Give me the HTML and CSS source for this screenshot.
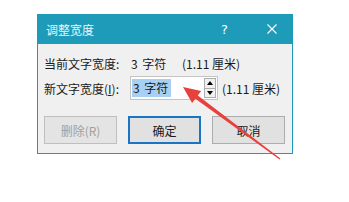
FILE: index.html
```html
<!DOCTYPE html>
<html lang="zh-CN">
<head>
  <meta charset="UTF-8">
  <title>调整宽度</title>
  <link rel="stylesheet" href="styles.css">
</head>
<body>
<div class="page">
  <div class="dialog">
    <div class="titlebar">
      <span class="title">调整宽度</span>
      <span class="help">?</span>
      <span class="close">
        <svg width="10" height="10" viewBox="0 0 10 10"><path d="M0.5 0.5 L9.5 9.5 M9.5 0.5 L0.5 9.5" stroke="#fff" stroke-width="1.2"/></svg>
      </span>
    </div>

    <div class="body">
      <div class="row first">
        <span class="label">当前文字宽度:</span>
        <span class="value">3&nbsp;字符</span>
        <span class="unit">(1.11 厘米)</span>
      </div>

      <div class="row">
        <span class="label">新文字宽度(<u>I</u>):</span>
        <div class="spin-input">
          <span class="selected">3&nbsp;字符</span>
          <div class="spinner">
            <div class="spin-btn"><svg width="6" height="4" viewBox="0 0 6 4"><path d="M3 0 L6 4 L0 4 Z" fill="#000"/></svg></div>
            <div class="spin-btn"><svg width="6" height="4" viewBox="0 0 6 4"><path d="M0 0 L6 0 L3 4 Z" fill="#000"/></svg></div>
          </div>
        </div>
        <span class="unit">(1.11 厘米)</span>
      </div>

      <div class="buttons">
        <button class="btn disabled">删除(R)</button>
        <button class="btn default">确定</button>
        <button class="btn">取消</button>
      </div>
    </div>
  </div>

  <!-- red annotation arrow -->
  <svg class="arrow" width="349" height="202" viewBox="0 0 349 202">
    <polygon points="183,87 201.1,91.1 197.8,95.5 280.4,158.5 279.6,159.5 195.4,98.7 192.1,103.1" fill="#e8403a"/>
  </svg>
</div>
</body>
</html>
```

FILE: styles.css
```css
body {
  margin: 0;
  background: #fff;
  font-family: "Noto Sans CJK SC", "Noto Sans", sans-serif;
  font-size: 12px;
  color: #1a1a1a;
}

.page {
  position: relative;
  width: 349px;
  height: 202px;
  padding: 14px 0 0 37px;
  box-sizing: border-box;
}

.dialog {
  width: 256px;
  border: 1px solid #1d9bb8;
  border-top: none;
  background: #f0f0f0;
  box-sizing: border-box;
}

.titlebar {
  height: 30px;
  background: #1d9bb8;
  color: #fff;
  display: flex;
  align-items: center;
  padding-left: 8px;
}

.title {
  flex: 1;
  color: #e8f6fa;
}

.help {
  margin-right: 39px;
  font-family: "DejaVu Sans", sans-serif;
  font-size: 13px;
}

.close {
  width: 10px;
  height: 10px;
  margin-right: 15px;
  display: flex;
}

.body {
  padding: 10px 6px 9px 6px;
}

.row {
  display: flex;
  align-items: center;
  height: 24px;
  margin-top: 4px;
}

.row.first {
  height: 18px;
  margin-top: 0;
}

.label {
  width: 87px;
  white-space: nowrap;
}

.label u {
  text-decoration: underline;
}

.value {
  width: 51px;
  word-spacing: 2px;
}

.spin-input {
  width: 88px;
  height: 24px;
  box-sizing: border-box;
  border: 1px solid #c4c4c4;
  background: #fff;
  display: flex;
  align-items: center;
  padding: 0 1px 0 1px;
  margin-left: -1px;
}

.selected {
  background: #a7d0f2;
  height: 18px;
  line-height: 18px;
  padding: 0 3px 0 1px;
  word-spacing: 2px;
}

.spinner {
  margin-left: auto;
  width: 12px;
  height: 20px;
  display: flex;
  flex-direction: column;
  border: 1px solid #adadad;
  box-sizing: border-box;
  background: #f0f0f0;
}

.spin-btn {
  flex: 1;
  display: flex;
  align-items: center;
  justify-content: center;
}

.spin-btn + .spin-btn {
  border-top: 1px solid #adadad;
}

.spin-input + .unit {
  margin-left: 4px;
}

.buttons {
  display: flex;
  gap: 11px;
  margin-top: 16px;
}

.btn {
  width: 73px;
  height: 28px;
  border: 1px solid #adadad;
  background: #e1e1e1;
  font-family: inherit;
  font-size: 12px;
  color: #1a1a1a;
  padding: 0;
}

.btn.default {
  border: 2px solid #1c74c4;
}

.btn.disabled {
  color: #a0a0a0;
  border-color: #bfbfbf;
  background: #e4e4e4;
}

.arrow {
  position: absolute;
  top: 0;
  left: 0;
}
```
